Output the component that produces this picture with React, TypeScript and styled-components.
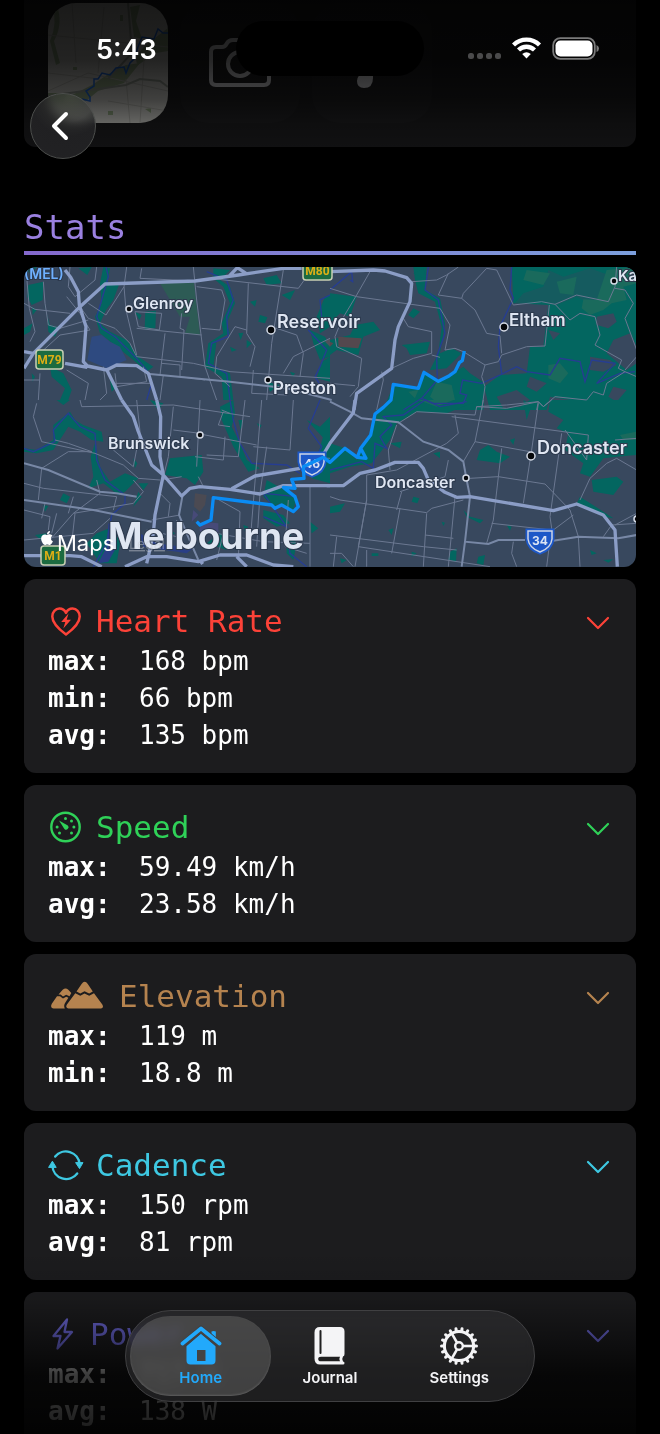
import React, { useState } from "react";
import styled, { createGlobalStyle } from "styled-components";
import { FaApple } from "react-icons/fa6";

const mono = `"DejaVu Sans Mono", "Liberation Mono", monospace`;
const sans = `Inter, "Liberation Sans", sans-serif`;

const GlobalStyle = createGlobalStyle`
  *, *::before, *::after { box-sizing: border-box; }
  body { margin: 0; background: #000; color: #fff; font-family: ${sans}; }
  h2, h3, dl, dd { margin: 0; font-weight: 400; }
  button { font: inherit; color: inherit; background: none; border: 0; padding: 0; cursor: pointer; }
  svg { display: block; }
`;

const Screen = styled.div`
  position: relative;
  height: 100vh;
  overflow: hidden;
  background: #000;
`;

const Scroller = styled.main`
  height: 100%;
  overflow-y: auto;
  padding: 0 24px;
  scrollbar-width: none;
`;

const MediaCard = styled.section`
  display: flex;
  gap: 12px;
  padding: 3px 24px 24px;
  border-radius: 0 0 12px 12px;
  background: #1c1c1e;
`;

const Thumb = styled.div`
  display: grid;
  place-items: center;
  width: 120px;
  height: 120px;
  overflow: hidden;
  border-radius: 28px;
  background: #202022;
`;

const SectionTitle = styled.h2`
  margin: 56px 0 12px;
  border-bottom: 4px solid;
  border-image: linear-gradient(90deg, #8468cc, #7c9fdc) 1;
  color: #9a80e0;
  font: 400 34px/48px ${mono};
`;

const MapFrame = styled.div`
  height: 300px;
  overflow: hidden;
  border-radius: 12px;
  background: #38485e;
`;

const CardList = styled.div`
  display: flex;
  flex-direction: column;
  gap: 12px;
  padding: 12px 0;
`;

const Card = styled.section`
  padding: 24px 24px 19px;
  border-radius: 12px;
  background: #1c1c1e;
`;

const CardToggle = styled.button<{ $color: string }>`
  display: flex;
  align-items: center;
  gap: 12px;
  width: 100%;
  height: 36px;
  color: ${(p) => p.$color};
  font: 400 31px/36px ${mono};
  text-align: left;
`;

const CardTitle = styled.span`
  flex: 1;
`;

const Readings = styled.dl`
  display: grid;
  grid-template-columns: 91px 1fr;
  padding-top: 4px;
  font: 400 26px/37px ${mono};
`;

const ReadingName = styled.dt`
  font-weight: 700;
`;

const TopFade = styled.div`
  position: absolute;
  inset: 0 0 auto;
  height: 180px;
  pointer-events: none;
  background: linear-gradient(#000000e0, #000000d4 60px, #000000b0 100px, #00000080 125px, #00000068 147px, #0000);
`;

const BottomFade = styled.div`
  position: absolute;
  inset: auto 0 0;
  height: 184px;
  pointer-events: none;
  background: linear-gradient(#0000, #00000020 50px, #00000073 90px, #000000c4 125px, #000000da 165px, #000000e6);
`;

const StatusBar = styled.header`
  position: absolute;
  inset: 0 0 auto;
  display: flex;
  align-items: center;
  justify-content: space-between;
  height: 98px;
  padding: 0 60px 0 96px;
`;

const Clock = styled.time`
  font-size: 27px;
  font-weight: 600;
`;

const StatusIcons = styled.div`
  display: flex;
`;

const Island = styled.div`
  position: absolute;
  top: 21px;
  left: 50%;
  width: 188px;
  height: 55px;
  margin-left: -94px;
  border-radius: 28px;
  background: #000;
`;

const BackButton = styled.button`
  && {
    position: absolute;
    top: 93px;
    left: 30px;
    display: grid;
    place-items: center;
    width: 66px;
    height: 66px;
    border: 1px solid #4c4e4c;
    border-radius: 50%;
    background: radial-gradient(circle at 60% 4%, #3d443799, #3a3b3a99 34%, #222224f2 54%, #222224);
    backdrop-filter: blur(4px);
  }
`;

const TabBar = styled.nav`
  position: absolute;
  bottom: 32px;
  left: 50%;
  display: grid;
  grid-template-columns: repeat(3, 1fr);
  width: 410px;
  height: 92px;
  padding: 5px 10px;
  transform: translateX(-50%);
  border: 1px solid #404042;
  border-radius: 46px;
  background: #30303190;
  backdrop-filter: blur(6px) brightness(1.4);
`;

const Tab = styled.a<{ $active?: boolean }>`
  position: relative;
  display: flex;
  flex-direction: column;
  align-items: center;
  padding-top: 9px;
  color: ${(p) => (p.$active ? "#22a9fb" : "#f4f4f6")};
  font-size: 15px;
  font-weight: 600;
  line-height: 22px;
  text-decoration: none;
  &::before {
    content: "";
    display: ${(p) => (p.$active ? "block" : "none")};
    position: absolute;
    inset: 0 -6px;
    z-index: -1;
    border-radius: 40px;
    background: #6a6a6a78;
    box-shadow: inset 0 -1px 2px #77777788;
  }
`;

const HeartIcon = () => (
  <svg width="36" height="36" viewBox="0 0 36 36" aria-hidden="true">
    <path d="M18 31.5C10.500 26 4.300 20.500 4.300 13.500C4.300 8.800 7.500 5.600 11.400 5.600C14.400 5.600 16.700 7.200 18 9.900C19.300 7.200 21.600 5.600 24.600 5.600C28.500 5.600 31.700 8.800 31.700 13.500C31.700 20.500 25.500 26 18 31.500Z" fill="none" stroke="currentColor" strokeWidth="2.500" strokeLinejoin="round" />
    <path d="M20.500 10.500L13.200 19H17.300L15.300 25.600L23 16.700H18.700Z" fill="currentColor" />
  </svg>
);

const GaugeIcon = () => (
  <svg width="36" height="36" viewBox="0 0 36 36" fill="currentColor" aria-hidden="true">
    <circle cx="17.500" cy="18" r="14.200" fill="none" stroke="currentColor" strokeWidth="2.400" />
    <path d="M11 11.500L19.800 16.400A2.400 2.400 0 1 1 16.400 19.900Z" />
    {[[17.500, 9.600], [23.500, 12], [25.900, 18], [23.500, 24], [11.500, 24], [9.100, 18]].map(([x, y]) => (
      <circle key={`${x}-${y}`} cx={x} cy={y} r="1.500" />
    ))}
  </svg>
);

const MountainIcon = () => (
  <svg width="59" height="36" viewBox="0 0 59 36" fill="currentColor" aria-hidden="true">
    <path d="M10.500 16.400L14.700 11.800Q17.600 9 20.300 11.800L23.300 15L21.500 18.300L18.200 16.800L15 18.600L12.600 16.600Z" />
    <path d="M9 18.300L12 18.300L15 20.600L18.200 18.700L20.400 19.700L17.400 24.500Q15.300 27.300 16.800 30.600H5.500Q1.800 29.500 3.800 25.700Z" />
    <path d="M28.500 13.500L33.600 5.900Q36.700 1.600 39.800 5.900L44.800 13.500L41.200 15.500L36.500 13.200L32.300 15.500Z" />
    <path d="M27.300 15.300L32.300 17.800L36.500 15.500L41.200 17.800L46 15.200L54.300 26.500Q56.200 29.600 53 30.600H20.500Q17 29.700 18.900 26.500Z" />
  </svg>
);

const CycleIcon = () => (
  <svg width="36" height="36" viewBox="0 0 36 36" aria-hidden="true">
    <g fill="none" stroke="currentColor" strokeWidth="2.400" strokeLinecap="round">
      <path d="M7.200 9.500A13.800 13.800 0 0 1 31.600 17" />
      <path d="M29.200 26.500A13.800 13.800 0 0 1 4.400 19" />
    </g>
    <path d="M27.600 15.600H35L31.500 21.600Z M.6 20.400H8.200L4.400 14.200Z" fill="currentColor" stroke="currentColor" strokeLinejoin="round" />
  </svg>
);

const BoltIcon = () => (
  <svg width="30" height="36" viewBox="0 0 30 36" aria-hidden="true">
    <path d="M19 3.500L5.500 20H12.500L9.500 32.500L24 16H16.500Z" fill="none" stroke="currentColor" strokeWidth="2.300" strokeLinejoin="round" />
  </svg>
);

const Chevron = () => (
  <svg width="28" height="28" viewBox="0 0 28 28" aria-hidden="true">
    <path d="M4 11L14 21L24 11" fill="none" stroke="currentColor" strokeWidth="2.200" strokeLinecap="round" strokeLinejoin="round" />
  </svg>
);

const HomeIcon = () => (
  <svg width="42" height="42" viewBox="0 0 42 42" aria-hidden="true">
    <path d="M6.500 21L21 8.500L35.500 21V35.500Q35.500 39.500 31.500 39.500H10.500Q6.500 39.500 6.500 35.500ZM17 25V36H25.500V25Z" fill="currentColor" fillRule="evenodd" />
    <path d="M31.500 6.500Q33.500 5.500 35.800 6.500V17L31.500 13Z" fill="currentColor" />
    <path d="M2.800 19.700L21 4.200L39.500 19.700" fill="none" stroke="#424142" strokeWidth="7" />
    <path d="M2.500 18.500L21 3.500L39.500 18.500" fill="none" stroke="currentColor" strokeWidth="3.800" strokeLinecap="round" strokeLinejoin="round" />
  </svg>
);

const BookIcon = () => (
  <svg width="42" height="42" viewBox="0 0 42 42" aria-hidden="true">
    <path d="M11 2H31Q35.500 2 35.500 6.500V29Q35.500 31 34 31.500Q32.500 34 34 36.500Q35.500 36.700 35.500 38Q35.500 39.500 34 39.500H11Q5.500 39.500 5.500 33.500V7.500Q5.500 2 11 2Z" fill="currentColor" />
    <path d="M11.500 6V28" stroke="#202021" strokeWidth="2" strokeLinecap="round" />
    <path d="M31 31.700H12Q9.200 31.700 9.200 34Q9.200 36.300 12 36.300H31Q29.600 34 31 31.700Z" fill="#202021" />
  </svg>
);

const GearIcon = () => (
  <svg width="42" height="42" viewBox="0 0 42 42" stroke="currentColor" fill="none" aria-hidden="true">
    <circle cx="21" cy="21" r="14.600" strokeWidth="3" />
    {Array.from({ length: 18 }, (_, i) => (
      <path key={i} d="M36 21H38.500" strokeWidth="3" strokeLinecap="round" transform={`rotate(${i * 20} 21 21)`} />
    ))}
    <circle cx="21" cy="21" r="3.800" strokeWidth="2.400" />
    {[0, 120, 240].map((a) => (
      <path key={a} d="M25 21H35.500" strokeWidth="2.600" transform={`rotate(${a} 21 21)`} />
    ))}
  </svg>
);

const DotsIcon = () => (
  <svg width="44" height="28" viewBox="0 0 44 28" fill="#4a4a4b" aria-hidden="true">
    {[0, 9, 18, 27].map((x) => (
      <rect key={x} x={x} y="18" width="6" height="6" rx="2.500" />
    ))}
  </svg>
);

const WifiIcon = () => (
  <svg width="40" height="28" viewBox="0 0 40 28" fill="none" stroke="#fff" strokeWidth="4.400" aria-hidden="true">
    <path d="M1.500 10A18.500 18.500 0 0 1 27.500 10" />
    <path d="M6.500 15A11.500 11.500 0 0 1 22.500 15" />
    <path d="M10.200 19Q14.500 15.400 18.800 19L14.500 23.500Z" fill="#fff" stroke="none" />
  </svg>
);

const BatteryIcon = () => (
  <svg width="48" height="28" viewBox="0 0 48 28" aria-hidden="true">
    <rect x="1.200" y="3.200" width="41.600" height="20.600" rx="7" fill="none" stroke="#7a7a7a" strokeWidth="1.800" />
    <rect x="3.500" y="5.500" width="37" height="16" rx="5" fill="#fff" />
    <path d="M44.500 10Q47 11 47 13.500Q47 16 44.500 17Z" fill="#7a7a7a" />
  </svg>
);

const CameraIcon = () => (
  <svg width="64" height="52" viewBox="0 0 64 52" fill="none" stroke="#e2e2e6" strokeWidth="4" aria-hidden="true">
    <path d="M8 10H14Q17 10 18.500 7Q20.500 3 25 3H39Q43.500 3 45.500 7Q47 10 50 10H56Q61 10 61 15V43Q61 48 56 48H8Q3 48 3 43V15Q3 10 8 10Z" />
    <circle cx="32" cy="27" r="12" />
  </svg>
);

const NoteIcon = () => (
  <svg width="56" height="56" viewBox="0 0 56 56" fill="#e2e2e6" aria-hidden="true">
    <path d="M13 46Q13 40 20 38L24 37V8L40 4V12L29 15V43Q29 53 20 53Q13 53 13 46Z" />
  </svg>
);

const RouteThumb = () => (
  <svg width="120" height="120" viewBox="0 0 120 120" aria-hidden="true">
    <rect width="120" height="120" fill="#cfcfca" />
    <g fill="#92a883">
      <path d="M98 42L120 25V48L108 50L90 62Q84 55 98 42Z" />
      <path d="M44 82L62 70L78 62L92 60L76 80L50 88L38 98L24 92Z" />
      <path d="M8 0Q16 20 6 38L12 60L8 62L2 38Q10 20 4 0Z M82 4L92 2L88 18L94 36L86 34Z M0 90H20L14 100L0 98Z" />
      <path d="M60 108h5v4h-5z M38 110h4v4h-4z M97 106l6-1v5z M72 12h3v6h-3z M25 64h4v3h-4z" />
    </g>
    <g fill="none" stroke="#b4b4ae" strokeWidth="1">
      <path d="M0 32L60 38L120 44M24 0L28 60M56 4L50 70M0 88L40 70L120 88M78 76L82 120M96 56L92 120M0 70L52 76M60 98L120 108" />
      <path d="M0 93L36 88L78 82L92 76L112 78L120 84M80 0L84 50L60 76" stroke="#959c92" strokeWidth="2" />
    </g>
    <path d="M120 30L115 30L110 26L106 36L94 34L90 44L86 56L82 60L78 70L76 64L68 65L62 72L54 70L50 76H46V83L38 88L42 94L42 98L34 96" fill="none" stroke="#1f6be0" strokeWidth="1.500" />
  </svg>
);

const landuse = (
  <>
    <g transform="translate(-72 -201)" fill="#036660">
      <path d="M310 201L330 205L322 250L360 245L340 300L318 330L300 370L330 395L380 420L415 470L460 500L440 515L400 480L350 440L300 400L285 350L305 310L300 250Z" />
      <path d="M480 250L582 248L600 405L555 400L570 350L540 350Z" fill="#2d5b55" />
      <path d="M436 335L468 332L466 385L434 387Z M405 335L425 345L418 360Z M85 255L130 245L128 300L95 315L82 290Z M72 205L110 201L95 225Z M235 205L275 201L262 225Z" />
      <path d="M130 305L142 350L145 395L165 410L178 382L150 375Z M72 385L98 370L90 395L72 405Z M96 320L110 330L98 345Z" />
      <path d="M640 205L690 210L660 240L690 260L705 310L680 370L690 400L650 420L640 500L690 520L700 600L670 600L665 530L615 500L625 430L670 400L665 370L690 310L670 260L640 235Z" />
      <path d="M790 235L830 225L845 250L800 255Z M845 285L885 270L870 300Z M750 305L770 300L765 320Z M780 345L802 352L795 370L775 365Z M715 400L730 398L722 420Z M740 420L755 430L740 445Z M690 440L710 450L695 455Z" />
      <path d="M975 290L990 285V380L960 400L950 350Z M930 390L975 410L990 440V470L960 480L940 430Z M965 485L990 470V545L950 535Z M800 545L840 555L810 575Z M870 515L885 520L878 530Z" />
      <path d="M150 500L190 520L215 570L205 600L180 600L195 565L155 530Z M95 520L105 530L98 545Z M330 540L350 560L335 575Z" />
      <path d="M275 410L305 405L330 425L360 440L380 480L320 505L262 480Z" fill="#2e4a80" />
      <path d="M975 425L990 415V440Z" fill="#50515c" />
    </g>
    <g transform="translate(918 -81)" fill="#036660">
      <path d="M545 81H920V510H480L462 440L510 405L590 400L600 320L640 320L655 195L550 190Z" />
      <path d="M580 160L640 140L655 90L700 110L780 85L850 110L845 180L760 180L740 170L680 195L630 182L550 195Z" fill="#38485e" opacity=".35" />
      <path d="M830 90L920 81V130L880 140L890 180L845 190L820 210L780 225L755 205L760 178L800 180L820 120Z" fill="#1a6a5c" />
      <path d="M590 90L660 100L640 135L580 120Z M680 125L740 110L730 165L690 160Z M655 375L690 370L715 400L690 430L655 415Z" fill="#1a6a5c" />
      <path d="M800 230L850 220L860 245L835 265L800 255Z M850 300L900 280L920 320V370L890 390L830 340Z M780 350L840 360L860 375L820 395L780 390Z M655 270L690 280L670 300Z" fill="#38485e" />
      <path d="M500 470L560 450L600 480L570 500L520 505Z M660 470L720 480L700 510H650Z M850 440L890 450L860 485L835 470Z M600 410L650 430L620 455L590 440Z" fill="#38485e" />
      <path d="M250 81L290 81L285 150L330 175L345 250L330 340L365 325L395 340L350 385L300 390L325 340L335 260L315 185L265 160L255 120Z" />
      <path d="M160 510L190 435L265 445L280 395L325 425L360 405L400 380L420 400L465 430L460 510Z" />
      <path d="M320 425L365 435L375 480L330 495L300 470Z M235 455L265 450L255 475Z" fill="#1a6a5c" />
      <path d="M0 160L80 170L60 230L30 220L0 250Z M75 255L130 245L150 270L100 290L85 345L20 330L0 345V300L60 285Z M215 315L300 305L290 340L240 345L230 325Z M235 225L250 205L270 215L250 235Z M250 100L280 85L290 120Z" />
      <path d="M25 290L95 295L85 325L25 320Z M0 305L10 310L0 320Z" fill="#54484e" />
    </g>
    <g transform="translate(-72 399)" fill="#036660">
      <path d="M160 75L210 35L225 60L250 75L305 95L310 125L275 120L240 95L205 80L160 150L110 160L72 155V145L110 150L160 120Z" />
      <path d="M285 130L300 200L330 245L375 220L415 235L375 275L355 285L310 250L265 265L280 230L272 170Z M400 175L412 190L405 205Z" />
      <path d="M510 175L605 165L610 215L585 255L560 235L495 225Z M600 300L615 305" />
      <path d="M660 20L700 0L705 40L695 80L720 130L740 180L780 205L745 215L700 140L665 60Z M715 60L730 60L722 90Z M770 70L785 75L780 85Z" />
      <path d="M920 60L960 80L990 50V200H940L985 130Z M980 70H990V250L935 235Z M800 240L890 290L880 330L840 310L820 320L790 290Z M790 330L850 345L870 370L830 380L790 355Z M930 365L955 385L935 400Z M860 390L890 430L880 480L860 460Z" />
      <path d="M415 250H445L430 270Z M190 280L210 290L200 310L180 300Z M415 275L425 290L400 320Z M105 405L140 400L130 425Z M260 430L290 400L340 380L360 430L350 490L300 490Z M450 0L490 10L475 30Z M170 0L190 15L210 0Z M620 430L660 400L690 420L680 450Z M500 380L525 400L510 410Z M130 315L145 318L135 335Z M730 375L745 380L735 395Z" />
      <path d="M325 370L345 380L350 440L325 485L295 490L320 440Z M420 400L470 430L580 445L560 460L430 440Z" fill="#2a3f86" />
      <path d="M585 280L620 285L615 315L600 335L582 320Z" fill="#4b4a52" />
      <path d="M580 330L595 345L575 365Z M605 365L655 370L655 400L610 405L598 390Z" fill="#474a78" />
    </g>
    <g transform="translate(918 399)" fill="#036660">
      <path d="M0 130L45 145L80 180L120 100L140 45L185 0H450L350 40L260 35L200 70L180 120L125 190L60 200L0 220Z" />
      <path d="M265 0L320 20L370 0Z" fill="#1a6a5c" />
      <path d="M660 0H920V165L860 170L820 175L780 230L750 220L760 190L705 150L715 100L680 85L700 60L655 35Z" />
      <path d="M785 240L860 230L880 245L850 285L790 275Z M750 290L820 335L850 355L820 350L740 310Z M450 150L475 135L500 155L540 170L510 190L440 180Z M540 120L555 115L550 135Z M310 160L330 155L330 175Z" />
      <path d="M250 290L268 295L262 310L245 305Z M0 320L45 310L30 335L0 340Z M360 455L380 445L378 485L355 480Z M445 470L465 465L460 495L440 490Z M175 390L190 385L185 405Z M335 365L345 368L340 378Z M400 330L420 350L460 360L450 370L410 350Z M530 375L545 380L540 392Z M780 450L800 460L785 465Z M30 475L50 480L35 490Z M180 130L215 125L210 145Z M125 460H145V468H125Z M820 480L850 478L835 488Z M245 455L260 460L245 470Z" />
      <path d="M870 105L920 95V120H880Z" fill="#1a6a5c" />
      <path d="M580 0L605 15L590 60Z" />
    </g>
  </>
);

const waterways = (
  <g fill="none" stroke="#263d92" strokeWidth="4">
    <path transform="translate(-72 -201)" d="M318 201L325 230L305 300L290 350L305 385L345 410L410 475L440 510L455 550L440 600M620 215L680 240L700 300L680 350L685 410L635 430L625 490L680 520L690 600M990 285L960 300L965 350M925 390L980 450L960 500L945 530L970 570" />
    <path transform="translate(918 -81)" d="M60 120L68 125L65 95L0 150M295 81L285 150L325 180L345 280L320 350L322 420L275 475L220 510M275 475L310 490L400 490L410 465L390 460L398 420L455 430L510 405L560 380L590 395L660 405L690 355L750 365L765 425L785 360L855 370L800 430L870 400L915 395M545 81L540 150L550 175L510 260L505 320L515 400" />
    <path transform="translate(-72 399)" d="M72 145L100 155L165 125L160 90L205 40L240 80L285 100L290 180L315 240L375 285L375 310L335 345L320 430L280 500M690 0L700 60L720 130L755 190L860 195L900 220M960 0L925 85L965 140L950 170M790 350L860 380L790 280L890 290M860 390L870 460L920 500" />
    <path transform="translate(918 399)" d="M0 210L95 185L130 205L135 130L170 145L150 110L185 75L160 50L220 45L285 0L330 20L410 5" />
  </g>
);

const minorRoads = (
  <g fill="none" stroke="#6b7891" strokeWidth="3">
    <path transform="translate(-72 -201)" d="M72 310L105 328L210 340M80 230L88 325L105 395L90 425M130 245L135 310L145 375L180 385L265 360M290 201L285 240L225 290L205 260L210 201M380 201L372 260L378 330L410 465M425 205L420 235L585 243M580 201L590 300L615 500L650 600M240 320L265 355L345 385L390 430L410 470L580 490L690 515L990 535M200 290L240 340L270 390L180 405L120 460M372 260L318 345L265 310M405 335L485 340L478 390L415 380ZM410 385L605 405M545 340L540 385L552 390L545 510M590 260L665 270L675 300L660 390L605 385M495 400L480 525M484 490L540 495V530L615 540M745 250L740 400L765 440L750 500M850 210L815 430L800 600M815 380L890 405L910 460L900 530M990 415L880 470L850 520M630 235L895 265L920 230M740 390L705 380L650 470L645 520L690 560M200 510L265 550L255 600M120 520L115 600M345 520L350 560L440 545L430 500M340 550L450 550M490 525L480 600M72 540L120 540M310 500L320 580L300 600M760 510L755 580L860 585" />
    <path transform="translate(918 -81)" d="M120 95L80 165L35 240L15 290L20 320L95 355L85 440L60 470M0 145L80 170L330 205L360 255L345 330L375 325L400 335L465 375L505 365L515 345L590 320L645 318L658 195M245 125L320 120L350 105L385 81M355 100L325 165L395 175L435 210L470 280L510 287L515 340M395 175L400 160L470 85L500 90L550 195L635 185L675 193L740 165L835 185L855 140L860 81M220 235L235 260L305 275V340L250 355L185 385M305 345L330 352M675 193L720 240L750 220L795 230L810 285L795 315L875 360L865 385L885 395L920 410M855 145L885 150L910 190L885 235L920 330M885 395L830 430L820 465L790 455L770 480L675 470L640 500L625 485L530 495L440 500M465 375L455 410L465 440L455 510M885 390L920 350M155 395L160 420L140 510M0 430L75 437M625 485L620 510" />
    <path transform="translate(-72 399)" d="M110 10L100 50L125 125L285 160L370 195L415 235L480 240M165 120L205 130L275 155L205 155L125 205L115 300M240 0L245 20L520 15M410 0L420 95L400 200L340 150M520 20L505 170L490 230M600 0L590 200M520 90L600 100M590 100L770 135M735 0L715 170L620 165M785 0L750 430M520 15L750 50M670 35L655 75L690 80M665 30L690 40M880 0L870 150L760 140M72 250L130 265L350 290M220 290L205 340M135 310L125 355M150 420L220 340L400 310L430 275L400 240M330 355L280 400L72 420M455 360L540 345M480 280L510 310L505 350M440 390L530 410L530 360M545 230L485 240M595 230L610 260M640 290L720 335L715 480M620 395L790 425L930 430M800 140L780 280L770 440M865 300L855 440L920 460M350 290L340 330M170 340L155 400M290 240L300 280L220 340M905 170L990 175M930 260V500M585 170L670 180L675 110M650 480L670 400M72 330L150 350L145 390M225 340L215 430" />
    <path transform="translate(918 399)" d="M375 45L385 100L350 130L200 210L110 225V300L75 500M205 70L260 35L435 45L440 20L530 25L625 5L640 20L665 0M365 50L775 105L770 180L705 90M625 10L605 150L580 310M460 0L435 125L400 185M435 125L600 155M515 145L490 360L470 430M420 235L505 230L645 252L720 330L745 410L750 500M180 210L175 150L200 75M375 290L355 500M0 290L30 300L290 338L305 325L400 300M210 325L185 460M215 275L200 330M290 340L280 500M485 370L665 390L660 420L650 500M670 390L730 345M0 405L280 440L380 450M85 440L480 500M110 300L85 440M820 410L845 375L920 370M855 375L920 340M695 100L660 350L670 420M855 120L920 115M285 405L370 415M0 460L35 460L70 500M20 410L10 500M110 450V500M550 425L545 460L560 500M750 300L780 235L830 190L860 175L920 210M210 275L345 230L355 180" />
  </g>
);

const mainRoads = (
  <>
    <g fill="none" stroke="#7888a6" strokeWidth="6">
      <path transform="translate(918 399)" d="M0 5L60 35L95 55L205 67L280 125L355 150L400 185L410 240L420 290L405 425L475 432L505 420H585M670 422L745 410L865 415L920 405M405 425L395 500" />
      <path transform="translate(-72 399)" d="M72 190L145 210L300 275L350 280M72 300L280 330L455 365M547 290L537 345L560 400L595 480M350 280L410 290M450 -78L690 -55L860 -35L995 0" />
    </g>
    <g fill="none" stroke="#8b9dc6" strokeWidth="10" strokeLinejoin="round">
      <path transform="translate(-72 -201)" d="M195 210L212 232L235 275L238 315L258 380L250 485L262 498L320 510L350 495L410 497L445 520L470 600M72 505L100 460L240 320L315 252L585 243L715 225L850 205H905M72 455L100 460M195 490L262 502M318 505L365 600M688 228L712 203L738 220" />
      <path transform="translate(918 -81)" d="M0 95L130 90L165 93L230 113L245 130L240 185L205 260L195 300L185 385L80 460L72 510" />
      <path transform="translate(-72 399)" d="M365 0L400 50L415 95L455 195L490 225L545 288L570 265L600 260L690 268L780 282L850 257H990M470 0L482 50L480 170L490 225L465 345L460 400L445 470L440 490M900 205L765 228L695 266M72 467H210L245 470L305 500M375 500L440 470H500L595 485L660 465H740L820 495L880 500M710 470L740 500M600 480L608 492" />
      <path transform="translate(918 399)" d="M75 0L70 38L0 130L-30 180M-10 257H40L90 220L135 210L195 187H265L280 205L295 240L345 277L380 292L420 290L670 332L740 312L820 345L855 390L862 500" />
    </g>
  </>
);

const routeLine = (
  <g fill="none" stroke="#0a8cf5" strokeWidth="10" strokeLinejoin="round">
    <path d="M1321 252L1315 281L1306 287L1293 314L1276 326L1243 343L1200 316L1183 364L1108 352L1101 399L1078 421L1053 441L1040 504L1010 544L1000 571L1026 574L1010 544L1000 571L963 544L918 586L898 571L838 599L840 634L803 637L813 664L778 661L813 689L823 719L808 734L773 714L753 724L743 714L568 692L561 759L528 774L518 764" />
  </g>
);

const places = [
  { name: "Glenroy", x: 109, y: 42, size: 16, dot: [105, 42, 3] },
  { name: "Reservoir", x: 253, y: 61, size: 18, dot: [247, 63, 4] },
  { name: "Eltham", x: 485, y: 59, size: 17, dot: [480, 60, 4] },
  { name: "Preston", x: 249, y: 127, size: 17, dot: [244, 113, 3] },
  { name: "Brunswick", x: 84, y: 182, size: 16, dot: [176, 168, 3] },
  { name: "Doncaster", x: 513, y: 187, size: 18, dot: [507, 189, 4] },
  { name: "Doncaster", x: 351, y: 221, size: 16, dot: [442, 211, 3] },
  { name: "Ka", x: 594, y: 14, size: 15, dot: [590, 14, 3] },
];

const MotorwaySign = ({ x, y, width, label }: { x: number; y: number; width: number; label: string }) => (
  <g>
    <rect x={x} y={y} width={width} height="19" rx="3" fill="#1c6b40" stroke="#c9d0b4" strokeWidth="1.500" />
    <text x={x + width / 2} y={y + 14} textAnchor="middle" fontSize="12" fontWeight="700" fontFamily="Roboto, sans-serif" fill="#dcae16">{label}</text>
  </g>
);

const RouteShield = ({ x, y, label }: { x: number; y: number; label: string }) => (
  <g transform={`translate(${x} ${y})`}>
    <path d="M-13 -11H13V-2Q12 8 0 12Q-12 8 -13 -2Z" fill="#1d58c8" stroke="#1d58c8" strokeWidth="3" />
    <path d="M-12 -10H12V-2Q11 7 0 11Q-11 7 -12 -2Z" fill="#1d58c8" stroke="#cdd5e6" strokeWidth="1.500" />
    <text y="4" textAnchor="middle" fontSize="12" fontWeight="700" fill="#dbe4f4">{label}</text>
  </g>
);

const RouteMap = () => (
  <svg width="100%" height="300" viewBox="0 0 612 300" preserveAspectRatio="xMidYMid slice" role="img" aria-label="Ride route across Melbourne" fontFamily={sans}>
    <svg width="612" height="300" viewBox="0 0 1836 900">
      {landuse}
      {waterways}
      {minorRoads}
      {mainRoads}
    </svg>
    <MotorwaySign x={12} y={83} width={27} label="M79" />
    <MotorwaySign x={279} y={-6} width={29} label="M80" />
    <MotorwaySign x={17} y={279} width={24} label="M1" />
    <RouteShield x={288} y={197} label="46" />
    <RouteShield x={516} y={274} label="34" />
    <svg width="612" height="300" viewBox="0 0 1836 900">{routeLine}</svg>
    <g fill="#dfe6f2" stroke="#2c394d" strokeWidth="2" paintOrder="stroke" fontWeight="600">
      {places.map((p) => (
        <React.Fragment key={`${p.name}-${p.x}`}>
          <circle cx={p.dot[0]} cy={p.dot[1]} r={p.dot[2]} fill="#05070a" stroke="#d5dbe6" strokeWidth="1.500" paintOrder="normal" />
          <text x={p.x} y={p.y} fontSize={p.size}>{p.name}</text>
        </React.Fragment>
      ))}
      <circle cx="613" cy="252" r="3" fill="#05070a" stroke="#d5dbe6" strokeWidth="1.500" paintOrder="normal" />
      <text x="0" y="12" fontSize="14" fill="#6fb0ff">(MEL)</text>
      <text x="84" y="282" fontSize="37" fontWeight="700">Melbourne</text>
    </g>
    <FaApple x="15" y="263" width="17" height="22" color="#fff" />
    <text x="33" y="284" fontSize="22" fill="#fff">Maps</text>
    <a href="#legal">
      <text x="105" y="282" fontSize="14" fill="#c8ccd4" opacity=".45" textDecoration="underline">Legal</text>
    </a>
  </svg>
);

const stats = [
  { title: "Heart Rate", color: "#fc4238", icon: <HeartIcon />, rows: [["max:", "168 bpm"], ["min:", "66 bpm"], ["avg:", "135 bpm"]] },
  { title: "Speed", color: "#2fd158", icon: <GaugeIcon />, rows: [["max:", "59.49 km/h"], ["avg:", "23.58 km/h"]] },
  { title: "Elevation", color: "#b5834f", icon: <MountainIcon />, rows: [["max:", "119 m"], ["min:", "18.8 m"]] },
  { title: "Cadence", color: "#3ec8e2", icon: <CycleIcon />, rows: [["max:", "150 rpm"], ["avg:", "81 rpm"]] },
  { title: "Power", color: "#6c68d8", icon: <BoltIcon />, rows: [["max:", "717 W"], ["avg:", "138 W"]] },
];

const StatCard = ({ title, color, icon, rows }: (typeof stats)[number]) => {
  const [open, setOpen] = useState(false);
  return (
    <Card>
      <h3>
        <CardToggle $color={color} aria-expanded={open} onClick={() => setOpen(!open)}>
          {icon}
          <CardTitle>{title}</CardTitle>
          <Chevron />
        </CardToggle>
      </h3>
      <Readings>
        {rows.map(([name, value]) => (
          <React.Fragment key={name}>
            <ReadingName>{name}</ReadingName>
            <dd>{value}</dd>
          </React.Fragment>
        ))}
      </Readings>
    </Card>
  );
};

export default function App() {
  return (
    <Screen>
      <GlobalStyle />
      <Scroller>
        <MediaCard>
          <Thumb><RouteThumb /></Thumb>
          <Thumb><CameraIcon /></Thumb>
          <Thumb><NoteIcon /></Thumb>
        </MediaCard>
        <SectionTitle>Stats</SectionTitle>
        <MapFrame><RouteMap /></MapFrame>
        <CardList>
          {stats.map((s) => <StatCard key={s.title} {...s} />)}
        </CardList>
      </Scroller>
      <TopFade />
      <BottomFade />
      <Island />
      <StatusBar>
        <Clock>5:43</Clock>
        <StatusIcons>
          <DotsIcon />
          <WifiIcon />
          <BatteryIcon />
        </StatusIcons>
      </StatusBar>
      <BackButton aria-label="Back">
        <svg width="32" height="36" viewBox="0 0 32 36" aria-hidden="true">
          <path d="M19 6L7 18L19 30" fill="none" stroke="#fff" strokeWidth="4" strokeLinecap="round" strokeLinejoin="round" />
        </svg>
      </BackButton>
      <TabBar>
        <Tab href="#home" $active aria-current="page"><HomeIcon />Home</Tab>
        <Tab href="#journal"><BookIcon />Journal</Tab>
        <Tab href="#settings"><GearIcon />Settings</Tab>
      </TabBar>
    </Screen>
  );
}
